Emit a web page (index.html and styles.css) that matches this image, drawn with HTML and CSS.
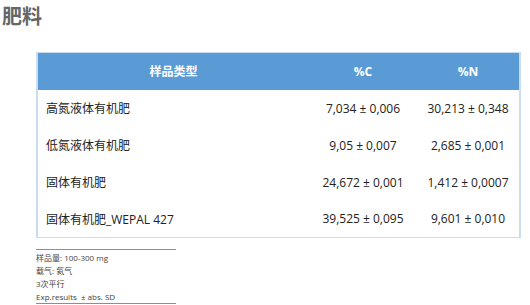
FILE: index.html
```
<!DOCTYPE html>
<html lang="zh">
<head>
<meta charset="utf-8">
<link rel="stylesheet" href="styles.css">
</head>
<body>
<h1 class="title">肥料</h1>
<div class="content">
  <table class="data">
    <thead>
      <tr><th class="c1">样品类型</th><th class="c2">%C</th><th class="c3">%N</th></tr>
    </thead>
    <tbody>
      <tr><td class="c1">高氮液体有机肥</td><td class="c2">7,034 ± 0,006</td><td class="c3">30,213 ± 0,348</td></tr>
      <tr><td class="c1">低氮液体有机肥</td><td class="c2">9,05 ± 0,007</td><td class="c3">2,685 ± 0,001</td></tr>
      <tr><td class="c1">固体有机肥</td><td class="c2">24,672 ± 0,001</td><td class="c3">1,412 ± 0,0007</td></tr>
      <tr><td class="c1">固体有机肥_WEPAL 427</td><td class="c2">39,525 ± 0,095</td><td class="c3">9,601 ± 0,010</td></tr>
    </tbody>
  </table>
  <div class="notes">
    <p>样品量: 100-300 mg</p>
    <p>载气: 氦气</p>
    <p>3次平行</p>
    <p>Exp.results&nbsp; ± abs. SD</p>
  </div>
</div>
</body>
</html>
```
FILE: styles.css
```
* { box-sizing: border-box; }
body {
  margin: 0;
  font-family: "Open Sans", "Noto Sans CJK SC", sans-serif;
  color: #222;
  background: #fff;
}
.title {
  margin: 0;
  padding: 4px 0 0 2px;
  height: 52px;
  font-size: 20px;
  line-height: 24px;
  font-weight: bold;
  color: #666;
  font-family: "Noto Sans CJK SC", sans-serif;
}
.content {
  padding-left: 36px;
}
.data {
  width: 485px;
  border-collapse: collapse;
  border: 1px solid #c9dcf0;
  border-left-width: 2px;
  border-right-width: 2px;
  font-size: 12px;
}
.data th {
  background: #5b9bd5;
  color: #fff;
  font-weight: bold;
  height: 37px;
  padding: 0;
  text-align: center;
}
.data td {
  height: 37px;
  padding: 0;
}
.data td.c1 {
  text-align: left;
  padding-left: 8px;
}
.c1 { width: 272px; }
.c2 { width: 108px; text-align: center; }
.c3 { text-align: center; }
.notes {
  margin-top: 11px;
  width: 140px;
  border-top: 1px solid #5b9bd5;
  border-bottom: 1px solid #5b9bd5;
  padding: 1px 0 0;
  font-size: 8px;
  color: #444;
}
.notes p {
  margin: 0;
  line-height: 13px;
}
```
